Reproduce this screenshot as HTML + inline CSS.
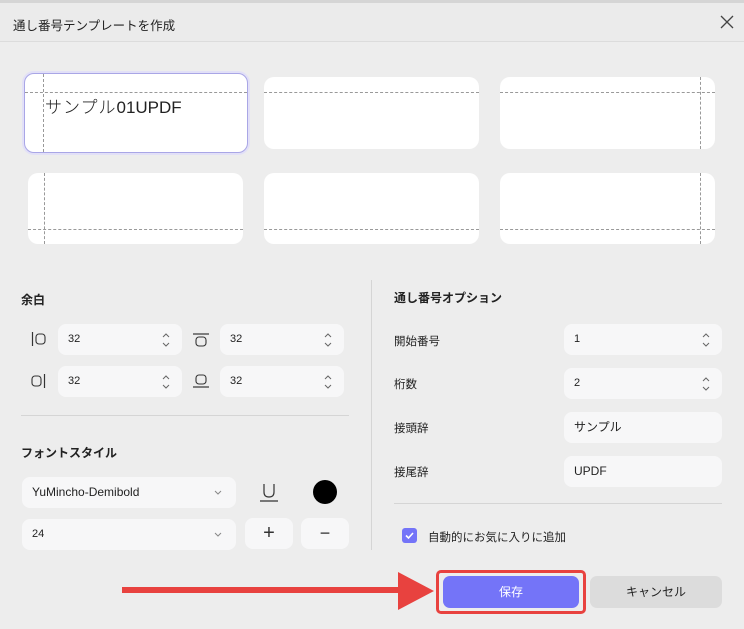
<!DOCTYPE html>
<html><head><meta charset="utf-8"><style>
*{box-sizing:border-box;margin:0;padding:0}
body{width:744px;height:629px;background:#ededed;font-family:"Liberation Sans","Noto Sans CJK JP",sans-serif;color:#222;position:relative;overflow:hidden;font-size:12px}
.a{position:absolute}
.card{position:absolute;background:#fff;border-radius:10px;overflow:hidden}
.dh{position:absolute;left:0;right:0;border-top:1.5px dashed #999}
.dv{position:absolute;top:0;bottom:0;border-left:1.5px dashed #999}
.inp{position:absolute;background:#f7f7f8;border-radius:8px;height:31px;font-size:11px;line-height:31px;padding-left:10px;color:#222}
.sp{position:absolute;right:11px;top:8px}
.lbl{position:absolute;font-size:11.5px;color:#222}
.h{position:absolute;font-size:12px;font-weight:bold;color:#222}
</style></head><body>
<div class="a" style="left:0;top:0;width:744px;height:3px;background:#d5d5d5"></div>
<div class="a" style="left:0;top:3px;width:744px;height:39px;background:#ebebeb;border-bottom:1px solid #dcdcdc"></div>
<div class="a" style="left:13px;top:15px;font-size:12.5px">通し番号テンプレートを作成</div>
<svg class="a" style="left:720px;top:15px" width="14" height="14"><path d="M1 1L13 13M13 1L1 13" stroke="#444" stroke-width="1.3"/></svg>

<div class="card" style="left:24px;top:73px;width:224px;height:80px;border:1.5px solid #a9a6e6;box-shadow:0 0 0 2px #e2e0f7">
<div class="dh" style="top:18px"></div><div class="dv" style="left:18px"></div>
<div class="a" style="left:20px;top:19px;font-size:17px;color:#222;font-weight:300;letter-spacing:1px">サンプル<span style="font-family:'Liberation Sans',sans-serif;letter-spacing:0">01UPDF</span></div></div>
<div class="card" style="left:264px;top:77px;width:215px;height:72px"><div class="dh" style="top:15px"></div></div>
<div class="card" style="left:500px;top:77px;width:215px;height:72px"><div class="dh" style="top:15px"></div><div class="dv" style="left:200px"></div></div>
<div class="card" style="left:28px;top:173px;width:215px;height:71px"><div class="dh" style="top:56px"></div><div class="dv" style="left:16px"></div></div>
<div class="card" style="left:264px;top:173px;width:215px;height:71px"><div class="dh" style="top:56px"></div></div>
<div class="card" style="left:500px;top:173px;width:215px;height:71px"><div class="dh" style="top:56px"></div><div class="dv" style="left:200px"></div></div>

<div class="h" style="left:21px;top:291px">余白</div>
<svg class="a" style="left:31px;top:332px" width="16" height="14"><path d="M1.5 0V14" stroke="#333" stroke-width="1.2"/><rect x="5" y="2" width="9" height="10" rx="3" fill="none" stroke="#333" stroke-width="1.1"/></svg>
<svg class="a" style="left:31px;top:374px" width="16" height="14"><rect x="1" y="2" width="9" height="10" rx="3" fill="none" stroke="#333" stroke-width="1.1"/><path d="M13.5 0V14" stroke="#333" stroke-width="1.2"/></svg>
<svg class="a" style="left:193px;top:333px" width="16" height="14"><path d="M0 1H16" stroke="#333" stroke-width="1.2"/><rect x="3" y="4" width="10" height="9" rx="3" fill="none" stroke="#333" stroke-width="1.1"/></svg>
<svg class="a" style="left:193px;top:374px" width="16" height="14"><rect x="3" y="1" width="10" height="9" rx="3" fill="none" stroke="#333" stroke-width="1.1"/><path d="M0 13H16" stroke="#333" stroke-width="1.2"/></svg>
<svg width="0" height="0" style="position:absolute"><defs><symbol id="s" viewBox="0 0 10 16"><path d="M2 5L5 2L8 5M2 11L5 14L8 11" stroke="#666" stroke-width="1" fill="none"/></symbol></defs></svg>
<div class="inp" style="left:58px;top:324px;width:124px">32<svg class="sp" width="10" height="16"><use href="#s"/></svg></div>
<div class="inp" style="left:220px;top:324px;width:124px">32<svg class="sp" width="10" height="16"><use href="#s"/></svg></div>
<div class="inp" style="left:58px;top:366px;width:124px">32<svg class="sp" width="10" height="16"><use href="#s"/></svg></div>
<div class="inp" style="left:220px;top:366px;width:124px">32<svg class="sp" width="10" height="16"><use href="#s"/></svg></div>
<div class="a" style="left:21px;top:415px;width:328px;height:1px;background:#d5d5d5"></div>
<div class="h" style="left:21px;top:444px">フォントスタイル</div>
<div class="inp" style="left:22px;top:477px;width:214px;font-size:12px">YuMincho-Demibold<svg class="a" style="right:14px;top:13px" width="8" height="5"><path d="M1 1L4 4L7 1" stroke="#888" fill="none"/></svg></div>
<svg class="a" style="left:259px;top:482px" width="20" height="20"><path d="M5 2V10Q5 15 10 15Q15 15 15 10V2" stroke="#333" stroke-width="1.2" fill="none"/><path d="M1 19H19" stroke="#333" stroke-width="1.2"/></svg>
<div class="a" style="left:313px;top:480px;width:24px;height:24px;border-radius:50%;background:#000"></div>
<div class="inp" style="left:22px;top:519px;width:214px">24<svg class="a" style="right:14px;top:13px" width="8" height="5"><path d="M1 1L4 4L7 1" stroke="#888" fill="none"/></svg></div>
<div class="inp" style="left:245px;top:518px;width:48px;padding:0;text-align:center;font-size:20px;color:#333">+</div>
<div class="inp" style="left:301px;top:518px;width:48px;padding:0;text-align:center;font-size:18px;color:#333">−</div>

<div class="a" style="left:371px;top:280px;width:1px;height:270px;background:#d5d5d5"></div>
<div class="h" style="left:394px;top:289px">通し番号オプション</div>
<div class="lbl" style="left:394px;top:333px">開始番号</div>
<div class="lbl" style="left:394px;top:376px">桁数</div>
<div class="lbl" style="left:394px;top:420px">接頭辞</div>
<div class="lbl" style="left:394px;top:464px">接尾辞</div>
<div class="inp" style="left:564px;top:324px;width:158px">1<svg class="sp" width="10" height="16"><use href="#s"/></svg></div>
<div class="inp" style="left:564px;top:368px;width:158px">2<svg class="sp" width="10" height="16"><use href="#s"/></svg></div>
<div class="inp" style="left:564px;top:412px;width:158px;font-size:12px">サンプル</div>
<div class="inp" style="left:564px;top:456px;width:158px;font-size:12px">UPDF</div>
<div class="a" style="left:394px;top:503px;width:328px;height:1px;background:#d5d5d5"></div>
<div class="a" style="left:402px;top:528px;width:15px;height:15px;border-radius:3px;background:#7474f8"></div>
<svg class="a" style="left:402px;top:528px" width="15" height="15"><path d="M4 7.5L6.5 10L11 5" stroke="#fff" stroke-width="1.6" fill="none"/></svg>
<div class="lbl" style="left:428px;top:529px">自動的にお気に入りに追加</div>

<div class="a" style="left:122px;top:587px;width:285px;height:6px;background:#e8423f"></div>
<svg class="a" style="left:398px;top:572px" width="36" height="38"><path d="M0 0L36 19L0 38Z" fill="#e8423f"/></svg>
<div class="a" style="left:436px;top:570px;width:150px;height:44px;border:3px solid #e8423f;border-radius:5px"></div>
<div class="a" style="left:443px;top:576px;width:136px;height:32px;background:#7474f8;border-radius:7px;color:#fff;text-align:center;line-height:32px;font-size:12px">保存</div>
<div class="a" style="left:590px;top:576px;width:132px;height:32px;background:#dcdcdc;border-radius:7px;text-align:center;line-height:32px;font-size:12px">キャンセル</div>
</body></html>
